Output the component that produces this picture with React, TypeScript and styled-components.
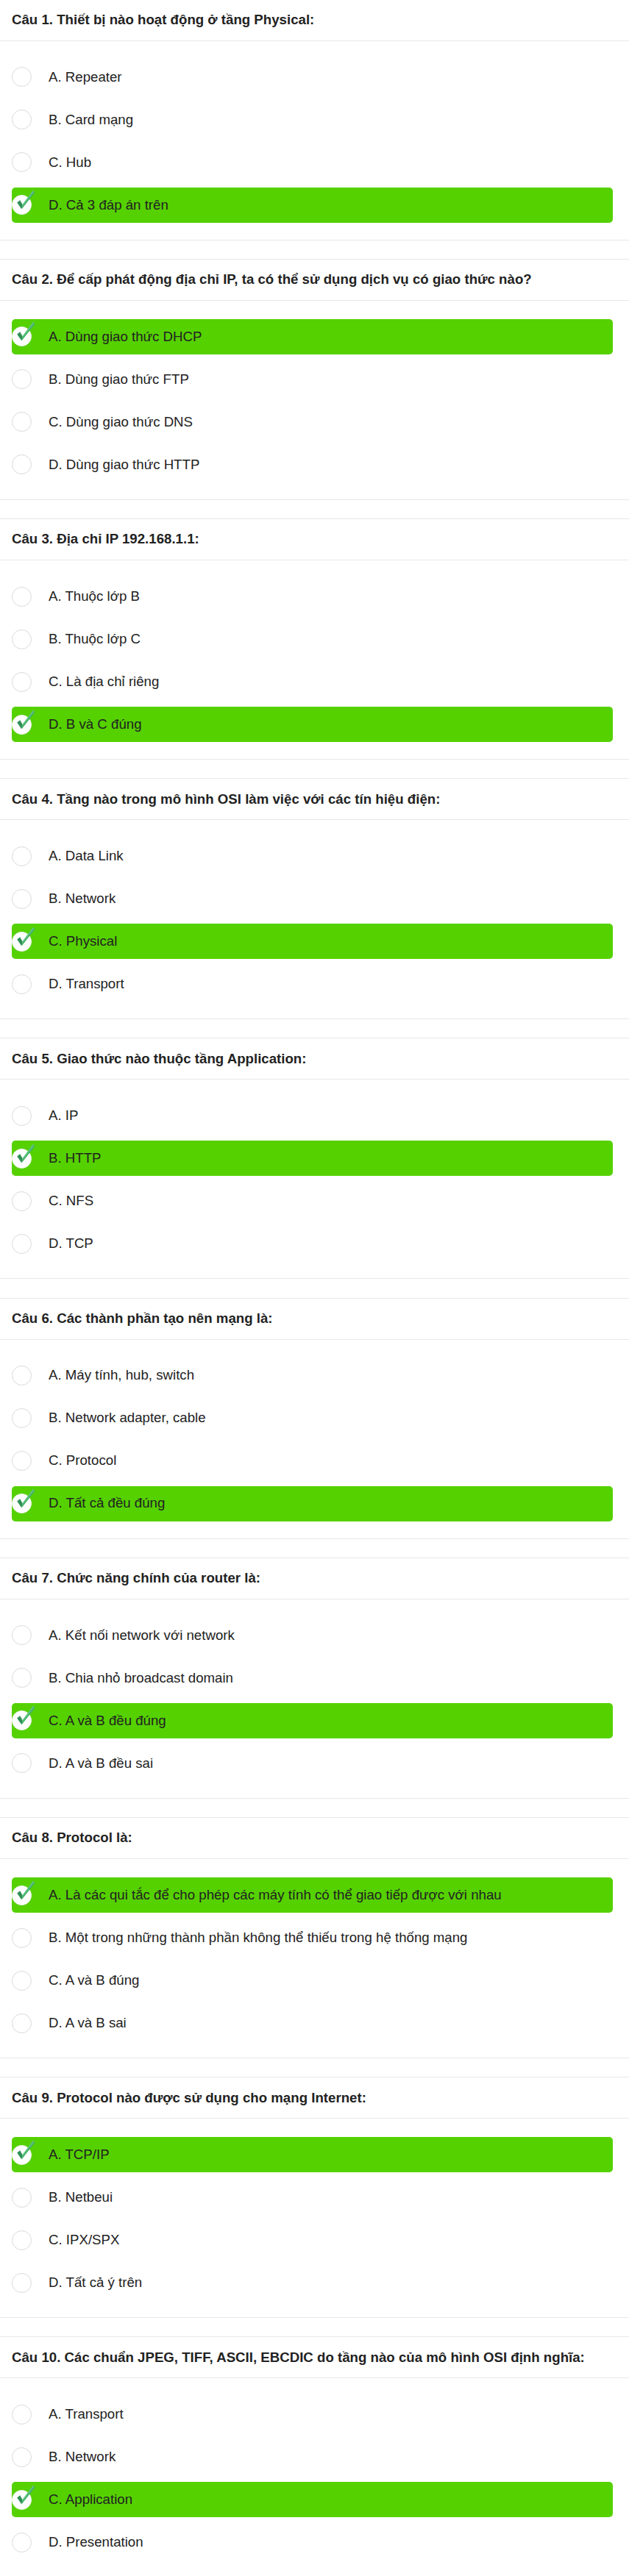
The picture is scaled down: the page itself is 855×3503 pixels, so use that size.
import React from "react";
import styled, { createGlobalStyle } from "styled-components";

const GlobalStyle = createGlobalStyle`
  html, body {
    margin: 0;
    padding: 0;
    background: #ffffff;
  }
  body {
    font-family: "Liberation Sans", Arial, Helvetica, sans-serif;
    color: #222222;
  }
`;

const Page = styled.div`
  margin-top: -1.3px;
  display: flex;
  flex-direction: column;
  gap: 25.2px;
`;

const Card = styled.section`
  border-top: 1px solid #e8e8e8;
  border-bottom: 1px solid #e8e8e8;
  background: #ffffff;
`;

const Header = styled.div`
  height: 55px;
  display: flex;
  align-items: center;
  padding: 0 16px;
  border-bottom: 1px solid #e8e8e8;
`;

const Title = styled.h3`
  margin: 0;
  font-size: 18.67px;
  font-weight: 700;
  color: #222222;
  line-height: 1.2;
`;

const Body = styled.div`
  padding: 25px 22px 23px 16px;
  display: flex;
  flex-direction: column;
  gap: 10px;
`;

const Option = styled.div<{ $correct?: boolean }>`
  height: 48px;
  display: flex;
  align-items: center;
  border-radius: 5px;
  background: ${(p) => (p.$correct ? "#55d100" : "transparent")};
`;

const Radio = styled.span<{ $correct?: boolean }>`
  position: relative;
  flex: 0 0 auto;
  width: 27px;
  height: 27px;
  box-sizing: border-box;
  border-radius: 50%;
  background: #ffffff;
  border: 1px solid ${(p) => (p.$correct ? "#f2f2f2" : "#d9d9d9")};
  margin-right: 23px;
`;

const CheckMark = styled.svg`
  position: absolute;
  left: 2px;
  top: -9px;
  width: 32px;
  height: 32px;
  overflow: visible;
`;

const Label = styled.span`
  font-size: 18.67px;
  color: #222222;
  line-height: 1.2;
  white-space: nowrap;
`;

type Q = { title: string; options: string[]; correct: number };

const questions: Q[] = [
  {
    title: "Câu 1. Thiết bị nào hoạt động ở tầng Physical:",
    options: ["A. Repeater", "B. Card mạng", "C. Hub", "D. Cả 3 đáp án trên"],
    correct: 3,
  },
  {
    title:
      "Câu 2. Để cấp phát động địa chỉ IP, ta có thể sử dụng dịch vụ có giao thức nào?",
    options: [
      "A. Dùng giao thức DHCP",
      "B. Dùng giao thức FTP",
      "C. Dùng giao thức DNS",
      "D. Dùng giao thức HTTP",
    ],
    correct: 0,
  },
  {
    title: "Câu 3. Địa chỉ IP 192.168.1.1:",
    options: ["A. Thuộc lớp B", "B. Thuộc lớp C", "C. Là địa chỉ riêng", "D. B và C đúng"],
    correct: 3,
  },
  {
    title: "Câu 4. Tầng nào trong mô hình OSI làm việc với các tín hiệu điện:",
    options: ["A. Data Link", "B. Network", "C. Physical", "D. Transport"],
    correct: 2,
  },
  {
    title: "Câu 5. Giao thức nào thuộc tầng Application:",
    options: ["A. IP", "B. HTTP", "C. NFS", "D. TCP"],
    correct: 1,
  },
  {
    title: "Câu 6. Các thành phần tạo nên mạng là:",
    options: [
      "A. Máy tính, hub, switch",
      "B. Network adapter, cable",
      "C. Protocol",
      "D. Tất cả đều đúng",
    ],
    correct: 3,
  },
  {
    title: "Câu 7. Chức năng chính của router là:",
    options: [
      "A. Kết nối network với network",
      "B. Chia nhỏ broadcast domain",
      "C. A và B đều đúng",
      "D. A và B đều sai",
    ],
    correct: 2,
  },
  {
    title: "Câu 8. Protocol là:",
    options: [
      "A. Là các qui tắc để cho phép các máy tính có thể giao tiếp được với nhau",
      "B. Một trong những thành phần không thể thiếu trong hệ thống mạng",
      "C. A và B đúng",
      "D. A và B sai",
    ],
    correct: 0,
  },
  {
    title: "Câu 9. Protocol nào được sử dụng cho mạng Internet:",
    options: ["A. TCP/IP", "B. Netbeui", "C. IPX/SPX", "D. Tất cả ý trên"],
    correct: 0,
  },
  {
    title:
      "Câu 10. Các chuẩn JPEG, TIFF, ASCII, EBCDIC do tầng nào của mô hình OSI định nghĩa:",
    options: ["A. Transport", "B. Network", "C. Application", "D. Presentation"],
    correct: 2,
  },
];

const Check = () => (
  <CheckMark viewBox="0 0 32 32">
    <path d="M4.2 18.6 L8.2 15.2 L11.6 21.2 L10.4 27.6 Z" fill="#2f8f55" />
    <path d="M10.4 27.6 L11.6 21.2 L26 2 L28.6 4.4 Z" fill="#45b26a" />
    <path d="M11.6 21.2 L26 2 L27.2 3.1 L12.3 22.6 Z" fill="#62c784" />
  </CheckMark>
);

export default function App() {
  return (
    <>
      <GlobalStyle />
      <Page>
        {questions.map((q, qi) => (
          <Card key={qi}>
            <Header>
              <Title>{q.title}</Title>
            </Header>
            <Body>
              {q.options.map((o, oi) => {
                const ok = oi === q.correct;
                return (
                  <Option key={oi} $correct={ok}>
                    <Radio $correct={ok}>{ok && <Check />}</Radio>
                    <Label>{o}</Label>
                  </Option>
                );
              })}
            </Body>
          </Card>
        ))}
      </Page>
    </>
  );
}
